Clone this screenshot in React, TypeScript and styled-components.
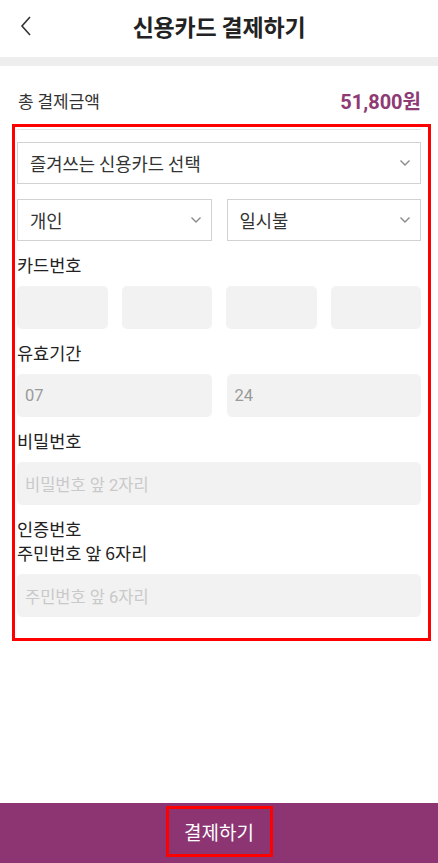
import styled, { createGlobalStyle } from 'styled-components';

const GlobalStyle = createGlobalStyle`
  html, body {
    margin: 0;
    padding: 0;
    background: #ffffff;
  }
  body {
    font-family: 'Noto Sans CJK KR', 'Noto Sans', sans-serif;
    color: #222222;
  }
  * {
    box-sizing: border-box;
  }
`;

const Page = styled.div`
  display: flex;
  flex-direction: column;
  min-height: 100vh;
  width: 100%;
`;

const Header = styled.header`
  position: relative;
  display: flex;
  align-items: center;
  justify-content: center;
  height: 52px;
  padding-bottom: 5px;
  border-bottom: 9px solid #eeeeee;
  box-sizing: content-box;
`;

const BackButton = styled.button`
  position: absolute;
  left: 14px;
  top: 14px;
  width: 24px;
  height: 24px;
  padding: 0;
  border: none;
  background: none;
  display: flex;
  align-items: center;
  justify-content: center;
`;

const Title = styled.h1`
  margin: 0;
  font-size: 23px;
  font-weight: 700;
  color: #222222;
  letter-spacing: -0.2px;
`;

const TotalRow = styled.div`
  display: flex;
  align-items: center;
  justify-content: space-between;
  height: 58px;
  padding: 10px 17px 0 18px;
`;

const TotalLabel = styled.span`
  font-size: 17px;
  color: #333333;
`;

const TotalAmount = styled.span`
  font-family: Roboto, 'Noto Sans CJK KR', sans-serif;
  font-size: 20px;
  font-weight: 700;
  color: #8e3a74;
`;

const Form = styled.section`
  margin: 0 7px 0 12px;
  border: 3px solid #ff0000;
  padding: 2px 7px 21px 2px;
`;

const FormInner = styled.div`
  display: flex;
  flex-direction: column;
  border-top: 1px solid #e6e6e6;
  padding-top: 12px;
`;

const Row = styled.div<{ $cols: number; $gap?: number }>`
  display: grid;
  grid-template-columns: repeat(${(p) => p.$cols}, 1fr);
  gap: ${(p) => p.$gap ?? 15}px;
  margin-bottom: ${(p) => (p.$cols === 1 ? 15 : 0)}px;
`;

const SelectBox = styled.div`
  display: flex;
  align-items: center;
  justify-content: space-between;
  height: 42px;
  padding: 0 9px 0 12px;
  border: 1px solid #d2d2d2;
  background: #ffffff;
  font-size: 17.7px;
  color: #333333;
`;

const Label = styled.div`
  font-size: 17.5px;
  line-height: 24px;
  color: #222222;
  margin: 12px 0 9px;
`;

const Field = styled.div<{ $tone?: 'value' | 'hint' }>`
  display: flex;
  align-items: center;
  height: 43px;
  padding: 0 8px;
  border-radius: 5px;
  background: #f2f2f2;
  font-family: Roboto, 'Noto Sans CJK KR', sans-serif;
  font-size: 16.5px;
  color: ${(p) => (p.$tone === 'value' ? '#9a9a9a' : '#c9c9c9')};
`;

const BottomBar = styled.footer`
  margin-top: auto;
  height: 60px;
  background: #8c3572;
  display: flex;
  align-items: flex-start;
  justify-content: center;
  padding-top: 3px;
`;

const PayButton = styled.button`
  width: 107px;
  height: 51px;
  border: 3px solid #ff0000;
  background: transparent;
  color: #ffffff;
  font-family: inherit;
  font-size: 19px;
  padding: 0;
`;

const Chevron = () => (
  <svg width="12" height="8" viewBox="0 0 12 8" fill="none">
    <path d="M1.5 1.5 L6 6 L10.5 1.5" stroke="#8a8a8a" strokeWidth="1.4" />
  </svg>
);

const Select = ({ label }: { label: string }) => (
  <SelectBox>
    <span>{label}</span>
    <Chevron />
  </SelectBox>
);

const App = () => {
  return (
    <>
      <GlobalStyle />
      <Page>
        <Header>
          <BackButton aria-label="back">
            <svg width="14" height="22" viewBox="0 0 14 22" fill="none">
              <path d="M11 2 L3 11 L11 20" stroke="#333333" strokeWidth="1.6" />
            </svg>
          </BackButton>
          <Title>신용카드 결제하기</Title>
        </Header>

        <TotalRow>
          <TotalLabel>총 결제금액</TotalLabel>
          <TotalAmount>51,800원</TotalAmount>
        </TotalRow>

        <Form>
          <FormInner>
            <Row $cols={1}>
              <Select label="즐겨쓰는 신용카드 선택" />
            </Row>
            <Row $cols={2}>
              <Select label="개인" />
              <Select label="일시불" />
            </Row>

            <Label>카드번호</Label>
            <Row $cols={4} $gap={14}>
              <Field />
              <Field />
              <Field />
              <Field />
            </Row>

            <Label>유효기간</Label>
            <Row $cols={2}>
              <Field $tone="value">07</Field>
              <Field $tone="value">24</Field>
            </Row>

            <Label>비밀번호</Label>
            <Field>비밀번호 앞 2자리</Field>

            <Label>
              인증번호
              <br />
              주민번호 앞 6자리
            </Label>
            <Field>주민번호 앞 6자리</Field>
          </FormInner>
        </Form>

        <BottomBar>
          <PayButton>결제하기</PayButton>
        </BottomBar>
      </Page>
    </>
  );
};

export default App;
